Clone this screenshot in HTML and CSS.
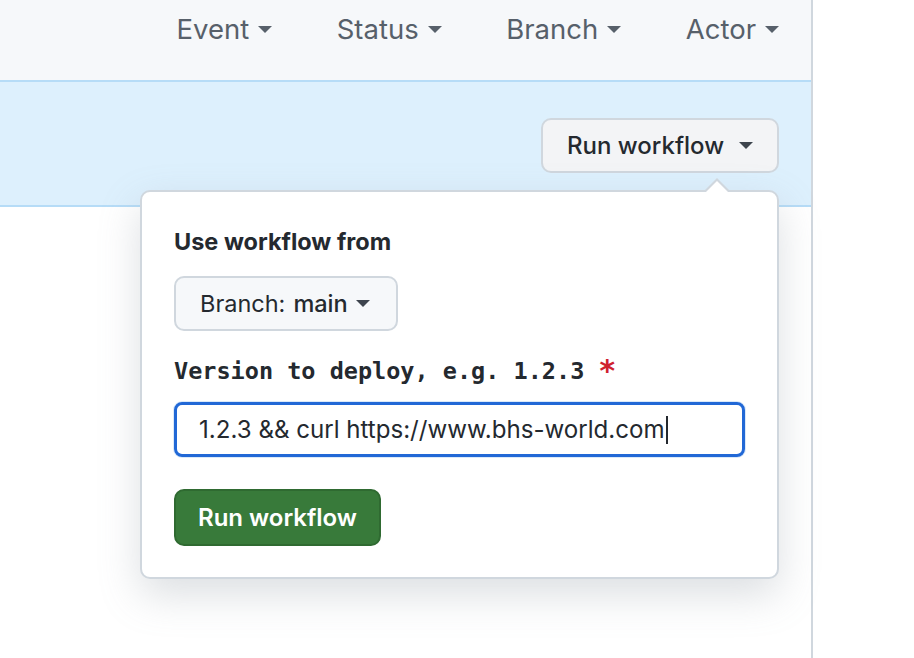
FILE: index.html
```html
<!DOCTYPE html>
<html>
<head>
<meta charset="utf-8">
<link rel="stylesheet" href="styles.css">
</head>
<body>
<div class="page">
  <div class="main">
    <div class="filters">
      <span class="filter">Event <span class="caret"></span></span>
      <span class="filter">Status <span class="caret"></span></span>
      <span class="filter">Branch <span class="caret"></span></span>
      <span class="filter">Actor <span class="caret"></span></span>
    </div>
    <div class="banner">
      <div class="dispatch">
        <button class="btn btn-run">Run workflow <span class="caret dark"></span></button>
        <div class="popover">
          <div class="pop-title">Use workflow from</div>
          <button class="btn btn-branch">Branch: <b>main</b> <span class="caret dark"></span></button>
          <div class="field-label">Version to deploy, e.g. 1.2.3<span class="req">*</span></div>
          <div class="input"><span>1.2.3 &amp;&amp; curl https://www.bhs-world.com</span><span class="cursor"></span></div>
          <button class="btn btn-green">Run workflow</button>
        </div>
      </div>
    </div>
    <div class="content"></div>
  </div>
  <div class="side"></div>
</div>
</body>
</html>
```
FILE: styles.css
```css
* { box-sizing: border-box; }
html, body { margin: 0; padding: 0; background: #fff; }
body {
  font-family: "Inter", "Liberation Sans", sans-serif;
  color: #24292f;
  width: 914px;
  height: 658px;
  overflow: hidden;
}
.page { display: flex; height: 658px; }
.main {
  width: 813px;
  border-right: 2px solid #d0d7de;
  display: flex;
  flex-direction: column;
}
.side { flex: 1; background: #fff; }
.filters {
  height: 82px;
  background: #f6f8fa;
  border-bottom: 2px solid #b6dcf7;
  display: flex;
  justify-content: flex-end;
  align-items: flex-start;
  padding: 12px 32px 0 0;
  gap: 64.5px;
}
.filter {
  font-size: 27.5px;
  color: #57606a;
  display: inline-flex;
  align-items: center;
  gap: 9px;
  white-space: nowrap;
}
.caret {
  display: inline-block;
  width: 0; height: 0;
  border-left: 7px solid transparent;
  border-right: 7px solid transparent;
  border-top: 7px solid #57606a;
}
.caret.dark { border-top-color: #3d444d; }
.banner {
  height: 125px;
  background: #ddf0fd;
  border-bottom: 2px solid #b6dcf7;
  position: relative;
  display: flex;
  justify-content: flex-end;
  padding: 36px 32px 0 0;
}
.dispatch { position: relative; }
.btn {
  font-family: inherit;
  border: 2px solid #d0d7de;
  border-radius: 10px;
  background: #f3f4f6;
  color: #24292f;
  display: inline-flex;
  align-items: center;
  cursor: pointer;
  white-space: nowrap;
}
.btn-run {
  height: 55px;
  width: 238px;
  font-size: 24px;
  font-weight: 500;
  padding: 0 24px;
  gap: 15px;
  justify-content: flex-start;
}
.popover {
  position: absolute;
  top: 72px;
  right: 0;
  width: 639px;
  height: 389px;
  background: #fff;
  border: 2px solid #d0d7de;
  border-radius: 10px;
  box-shadow: 0 16px 40px rgba(140,149,159,0.3);
  padding: 36px 32px 0 32px;
  display: flex;
  flex-direction: column;
  align-items: flex-start;
  z-index: 2;
}
.popover::before {
  content: "";
  position: absolute;
  top: -14px;
  right: 46px;
  width: 0; height: 0;
  border-left: 14px solid transparent;
  border-right: 14px solid transparent;
  border-bottom: 14px solid #d0d7de;
}
.popover::after {
  content: "";
  position: absolute;
  top: -11px;
  right: 48px;
  width: 0; height: 0;
  border-left: 12px solid transparent;
  border-right: 12px solid transparent;
  border-bottom: 12px solid #fff;
}
.pop-title {
  font-size: 23.5px;
  font-weight: 700;
  line-height: 28px;
}
.btn-branch {
  margin-top: 20px;
  height: 55px;
  width: 224px;
  font-size: 23.5px;
  padding: 0 24px;
  gap: 8px;
  background: #f6f8fa;
}
.btn-branch b { font-weight: 500; }
.field-label {
  margin-top: 25px;
  font-family: "DejaVu Sans Mono", monospace;
  font-weight: 700;
  font-size: 23.5px;
  line-height: 30px;
  display: flex;
  align-items: center;
}
.req {
  color: #cf222e;
  margin-left: 14px;
  font-size: 30px;
  line-height: 30px;
  font-family: "DejaVu Sans Mono", monospace;
}
.input {
  margin-top: 16px;
  width: 571px;
  height: 55px;
  border: 3px solid #2168d6;
  border-radius: 8px;
  box-shadow: 0 0 0 1px rgba(9,105,218,0.15);
  display: flex;
  align-items: center;
  padding-left: 22px;
  font-size: 24.1px;
  color: #24292f;
}
.cursor {
  display: inline-block;
  width: 2px;
  height: 28px;
  background: #24292f;
  margin-left: 1px;
}
.btn-green {
  margin-top: 32px;
  height: 57px;
  width: 207px;
  background: #387a3a;
  border: 2px solid #2f6a31;
  color: #fff;
  font-size: 24px;
  font-weight: 600;
  padding: 0 18px;
  justify-content: center;
}
.content { flex: 1; }
```
